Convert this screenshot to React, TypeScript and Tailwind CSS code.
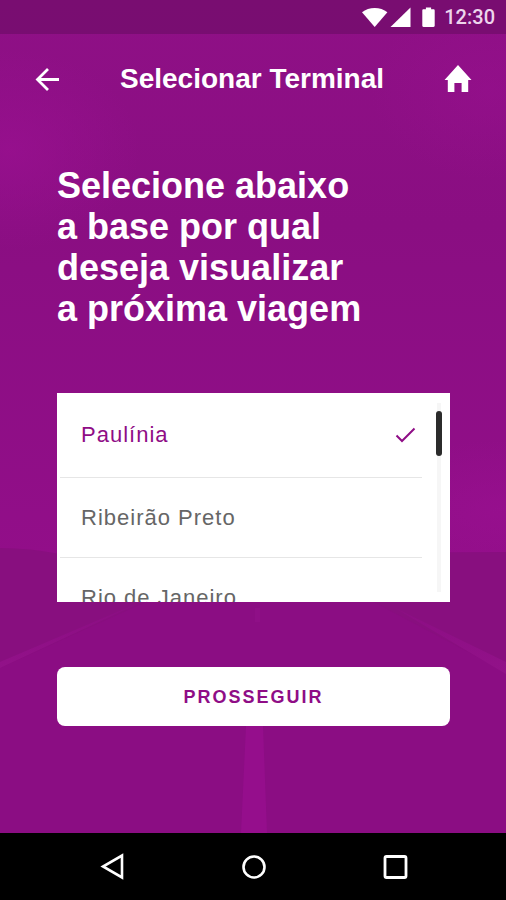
import clsx from 'clsx'
import React from 'react'

const TERMINALS = ['Paulínia', 'Ribeirão Preto', 'Rio de Janeiro']

function RoadBackground() {
  return (
    <svg
      className="absolute inset-0 -z-10 h-full w-full"
      viewBox="0 0 506 833"
      preserveAspectRatio="xMidYMid slice"
      aria-hidden="true"
    >
      <defs>
        <linearGradient id="sky" x1="0" y1="0" x2="0" y2="1">
          <stop offset="0" stopColor="#8f1086" />
          <stop offset="0.4" stopColor="#8a0e82" />
          <stop offset="1" stopColor="#920e89" />
        </linearGradient>
        <linearGradient id="verge" x1="0" y1="0" x2="0" y2="1">
          <stop offset="0" stopColor="#8b0d83" />
          <stop offset="1" stopColor="#921289" />
        </linearGradient>
        <radialGradient id="glow">
          <stop offset="0" stopColor="#9a1091" />
          <stop offset="1" stopColor="#9a1091" stopOpacity="0" />
        </radialGradient>
      </defs>
      <rect width="506" height="560" fill="url(#sky)" />
      <ellipse cx="10" cy="150" rx="130" ry="100" fill="url(#glow)" opacity="0.7" />
      <ellipse cx="490" cy="90" rx="120" ry="90" fill="url(#glow)" opacity="0.4" />
      <ellipse cx="500" cy="510" rx="140" ry="70" fill="url(#glow)" opacity="0.6" />
      <path d="M0 548 Q30 548 60 554 L506 552 V833 H0Z" fill="#880f7f" />
      <path d="M150 600 H370 L506 672 V833 H0 V668Z" fill="#8b0d83" />
      <path d="M0 662 L150 598 L0 668Z M506 662 L395 608 L506 674Z" fill="url(#verge)" />
      <path d="M255 608 h5 v14 h-5Z" fill="#8f0f87" />
      <path d="M246 726 H263 L267 833 H241Z" fill="#950e8c" />
    </svg>
  )
}

function StatusBar() {
  return (
    <div className="flex h-[34px] items-center justify-end bg-[#730c6c]/80 pr-[11px] text-white">
      <svg className="h-5 w-[74px]" viewBox="0 0 74 20" fill="currentColor" aria-hidden="true">
        <path d="M0 5.2C3.5 2.3 8 .9 12.7 .9s9.2 1.4 12.7 4.300L12.7 20Z" />
        <path d="M48.500 .6V20H28.500Z" />
        <path d="M61.500 2.200h2.400V.5h5.200v1.700h2.400c.7 0 1.200.5 1.200 1.200v15.400c0 .7-.5 1.200-1.200 1.200H61.500c-.7 0-1.200-.5-1.200-1.200V3.400c0-.7.5-1.200 1.200-1.200Z" />
      </svg>
      <time className="ml-2 font-[Roboto,sans-serif] text-xl font-medium text-[#edd5ec]">12:30</time>
    </div>
  )
}

function Header() {
  return (
    <header className="flex h-[90px] items-center justify-between px-[34px]">
      <button type="button" aria-label="Voltar">
        <svg
          className="size-[26px]"
          viewBox="0 0 26 26"
          fill="none"
          stroke="currentColor"
          strokeWidth="2.8"
          aria-hidden="true"
        >
          <path d="M25 13.500H3.500M14 3L3.500 13.500L14 24" />
        </svg>
      </button>
      <h1 className="text-[28px] leading-8 font-bold">Selecionar Terminal</h1>
      <button type="button" aria-label="Início">
        <svg className="size-7" viewBox="0 0 28 28" fill="currentColor" aria-hidden="true">
          <path d="M14 0L27.500 15H24.200V27H17.600V18H10.400V27H3.800V15H.5Z" />
        </svg>
      </button>
    </header>
  )
}

interface ITerminalListProps {
  selected: string
  onSelect: (terminal: string) => void
}

function TerminalList({ selected, onSelect }: ITerminalListProps) {
  return (
    <fieldset className="mt-16 flex h-[209px] bg-white">
      <legend className="sr-only">Terminal</legend>
      <div className="flex-1 overflow-y-auto pl-[3px] [scrollbar-width:none]">
        {TERMINALS.map((terminal) => (
          <label
            key={terminal}
            className={clsx(
              'relative flex h-20 cursor-pointer items-center justify-between border-b border-[#e6e6e6] pr-[6px] pl-[21px] text-[22px] leading-7 tracking-[1px] first:h-[85px]',
              terminal === selected ? 'text-[#8f0d86]' : 'text-[#666]',
            )}
          >
            <input
              type="radio"
              name="terminal"
              className="sr-only"
              checked={terminal === selected}
              onChange={() => onSelect(terminal)}
            />
            {terminal}
            {terminal === selected && (
              <svg
                className="h-4 w-[21px]"
                viewBox="0 0 21 16"
                fill="none"
                stroke="currentColor"
                strokeWidth="2"
                aria-hidden="true"
              >
                <path d="M1.500 8.500L7 14L19.500 1.500" />
              </svg>
            )}
          </label>
        ))}
      </div>
      <div className="flex w-7 justify-center py-[10px] pl-[6px]">
        <div className="flex w-1 justify-center bg-[#f6f6f6] pt-2">
          <div className="h-[45px] w-[6px] shrink-0 rounded-sm bg-[#2b2b2b]" />
        </div>
      </div>
    </fieldset>
  )
}

function NavigationBar() {
  return (
    <nav className="flex h-[67px] items-center justify-between bg-black pr-[95px] pl-[97px] text-white">
      <button type="button" aria-label="Voltar no sistema">
        <svg className="size-8" viewBox="0 0 32 32" fill="none" stroke="currentColor" strokeWidth="2.6" aria-hidden="true">
          <path d="M25 4.500V26.500L6 15.500Z" />
        </svg>
      </button>
      <button type="button" aria-label="Tela inicial">
        <svg className="size-8" viewBox="0 0 32 32" fill="none" stroke="currentColor" strokeWidth="2.6" aria-hidden="true">
          <circle cx="16" cy="16" r="10.500" />
        </svg>
      </button>
      <button type="button" aria-label="Aplicativos recentes">
        <svg className="size-8" viewBox="0 0 32 32" fill="none" stroke="currentColor" strokeWidth="2.8" aria-hidden="true">
          <rect x="6" y="5.500" width="21" height="21" rx="1.500" />
        </svg>
      </button>
    </nav>
  )
}

function App() {
  const [selected, setSelected] = React.useState(TERMINALS[0])

  return (
    <div className="flex min-h-screen flex-col font-['Liberation_Sans',sans-serif]">
      <div className="relative isolate flex-1 overflow-hidden bg-[#8b0d83] text-white">
        <RoadBackground />
        <StatusBar />
        <Header />
        <main className="pt-[41px] pr-14 pb-16 pl-[57px]">
          <h2 className="text-[36px] leading-[41px] font-bold">
            Selecione abaixo
            <br />
            a base por qual
            <br />
            deseja visualizar
            <br />
            a próxima viagem
          </h2>
          <TerminalList selected={selected} onSelect={setSelected} />
          <button
            type="button"
            className="mt-[65px] h-[59px] w-full rounded-lg bg-white text-lg font-bold tracking-[2px] text-[#8f0d86]"
          >
            PROSSEGUIR
          </button>
        </main>
      </div>
      <NavigationBar />
    </div>
  )
}

export default App
